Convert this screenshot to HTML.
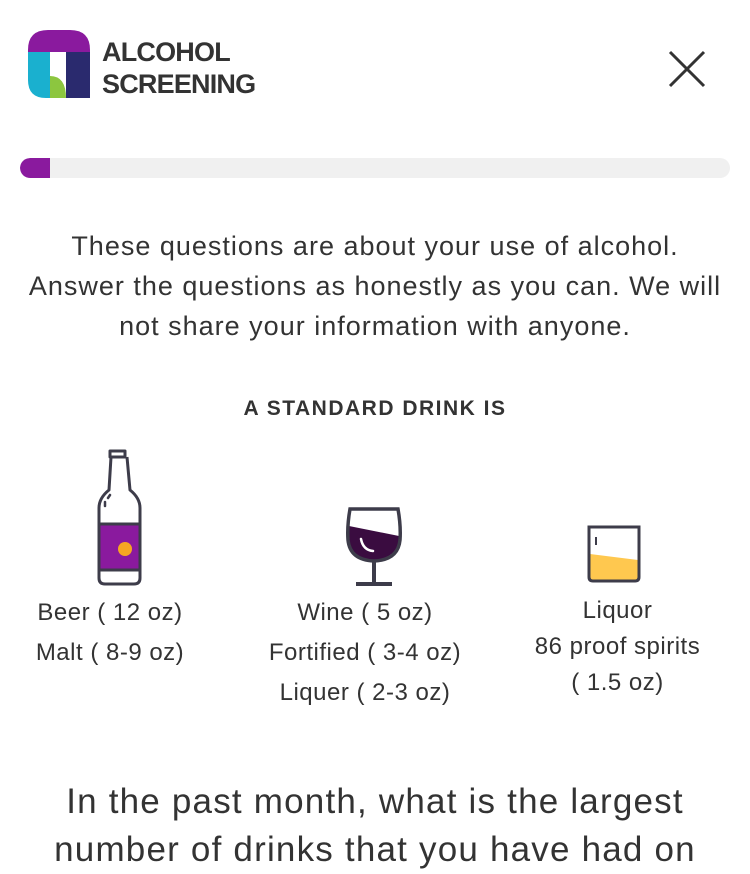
<!DOCTYPE html>
<html><head><meta charset="utf-8"><style>
*{margin:0;padding:0;box-sizing:border-box}
body{width:750px;height:867px;overflow:hidden;background:#fff;font-family:"Liberation Sans",sans-serif;color:#3a3a3a;position:relative}
.abs{position:absolute}
.brand{left:102px;top:36px;font-weight:bold;font-size:27px;line-height:32px;color:#333;letter-spacing:-0.8px}
.bar{left:20px;top:158px;width:710px;height:20px;border-radius:10px;background:#f0f0f0;overflow:hidden}
.bar div{width:30px;height:20px;background:#8a1a9e;border-radius:10px 0 0 10px}
.intro{left:0;top:226px;width:750px;text-align:center;font-size:27px;line-height:40px;color:#333;letter-spacing:1px}
.h{left:0;top:397px;width:750px;text-align:center;font-weight:bold;font-size:21px;color:#333;letter-spacing:1.5px}
.lab{text-align:center;font-size:24px;line-height:40px;color:#333;letter-spacing:0.5px}
.q{left:0;top:778px;width:750px;text-align:center;font-size:35px;line-height:48px;color:#333;letter-spacing:1.2px}
</style></head><body>
<svg class="abs" style="left:28px;top:30px" width="62" height="68" viewBox="0 0 62 68">
<path d="M0 20 Q0 0 20 0 H42 Q62 0 62 20 V22 H0Z" fill="#8a1a9e"/>
<path d="M0 22 H22 V68 H18 Q0 68 0 50Z" fill="#1ab0cf"/>
<path d="M38 22 H62 V68 H38Z" fill="#2a2a6e"/>
<path d="M22 46 Q38 46 38 68 H22Z" fill="#8cc63f"/>
</svg>
<div class="abs brand">ALCOHOL<br>SCREENING</div>
<svg class="abs" style="left:668px;top:50px" width="38" height="38" viewBox="0 0 38 38"><path d="M2 2L36 36M36 2L2 36" stroke="#333" stroke-width="3"/></svg>
<div class="abs bar"><div></div></div>
<div class="abs intro">These questions are about your use of alcohol.<br>Answer the questions as honestly as you can. We will<br>not share your information with anyone.</div>
<div class="abs h">A STANDARD DRINK IS</div>
<svg class="abs" style="left:96px;top:448px" width="48" height="140" viewBox="0 0 48 140">
<path d="M4 76 H43 V122 H4Z" fill="#8a1a9e"/>
<circle cx="29" cy="101" r="7" fill="#f5a623"/>
<path d="M14 3 H29 V9 H14Z M15 9 L13 42 Q3 50 3 60 V130 Q3 136 9 136 H38 Q44 136 44 130 V60 Q44 50 34 42 L31 9" fill="none" stroke="#3d3c4a" stroke-width="3" stroke-linejoin="round"/>
<path d="M3 76 H44 M3 122 H44" stroke="#3d3c4a" stroke-width="3"/>
<path d="M9 58 V54 M12 50 L14 47" stroke="#3d3c4a" stroke-width="2.5" stroke-linecap="round"/>
</svg>
<svg class="abs" style="left:345px;top:506px" width="58" height="80" viewBox="0 0 58 80">
<path d="M4 20 L54 30 Q54 52 29 54 Q3 52 3 30Z" fill="#3a0c40"/>
<path d="M5 3 H53 Q56 20 55 34 Q53 54 29 55 Q5 54 3 34 Q2 20 5 3Z" fill="none" stroke="#3d3c4a" stroke-width="3.5"/>
<path d="M29 55 V78 M11 78 H47" stroke="#3d3c4a" stroke-width="4"/>
<path d="M16 33 Q18 44 28 45" fill="none" stroke="#fff" stroke-width="2.5" stroke-linecap="round"/>
</svg>
<svg class="abs" style="left:587px;top:525px" width="54" height="58" viewBox="0 0 54 58">
<path d="M3 29 L51 35 V52 Q51 55 48 55 H6 Q3 55 3 52Z" fill="#ffc84f"/>
<path d="M2 2 H52 V52 Q52 56 48 56 H6 Q2 56 2 52Z" fill="none" stroke="#3d3c4a" stroke-width="3"/>
<path d="M9 12 V20" stroke="#3d3c4a" stroke-width="2"/>
</svg>
<div class="abs lab" style="left:10px;top:593px;width:200px;">Beer ( 12 oz)<br>Malt ( 8-9 oz)</div>
<div class="abs lab" style="left:235px;top:593px;width:260px;">Wine ( 5 oz)<br>Fortified ( 3-4 oz)<br>Liquer ( 2-3 oz)</div>
<div class="abs lab" style="left:505px;top:593px;width:225px;line-height:36px">Liquor<br>86 proof spirits<br>( 1.5 oz)</div>
<div class="abs q">In the past month, what is the largest<br>number of drinks that you have had on</div>
</body></html>
